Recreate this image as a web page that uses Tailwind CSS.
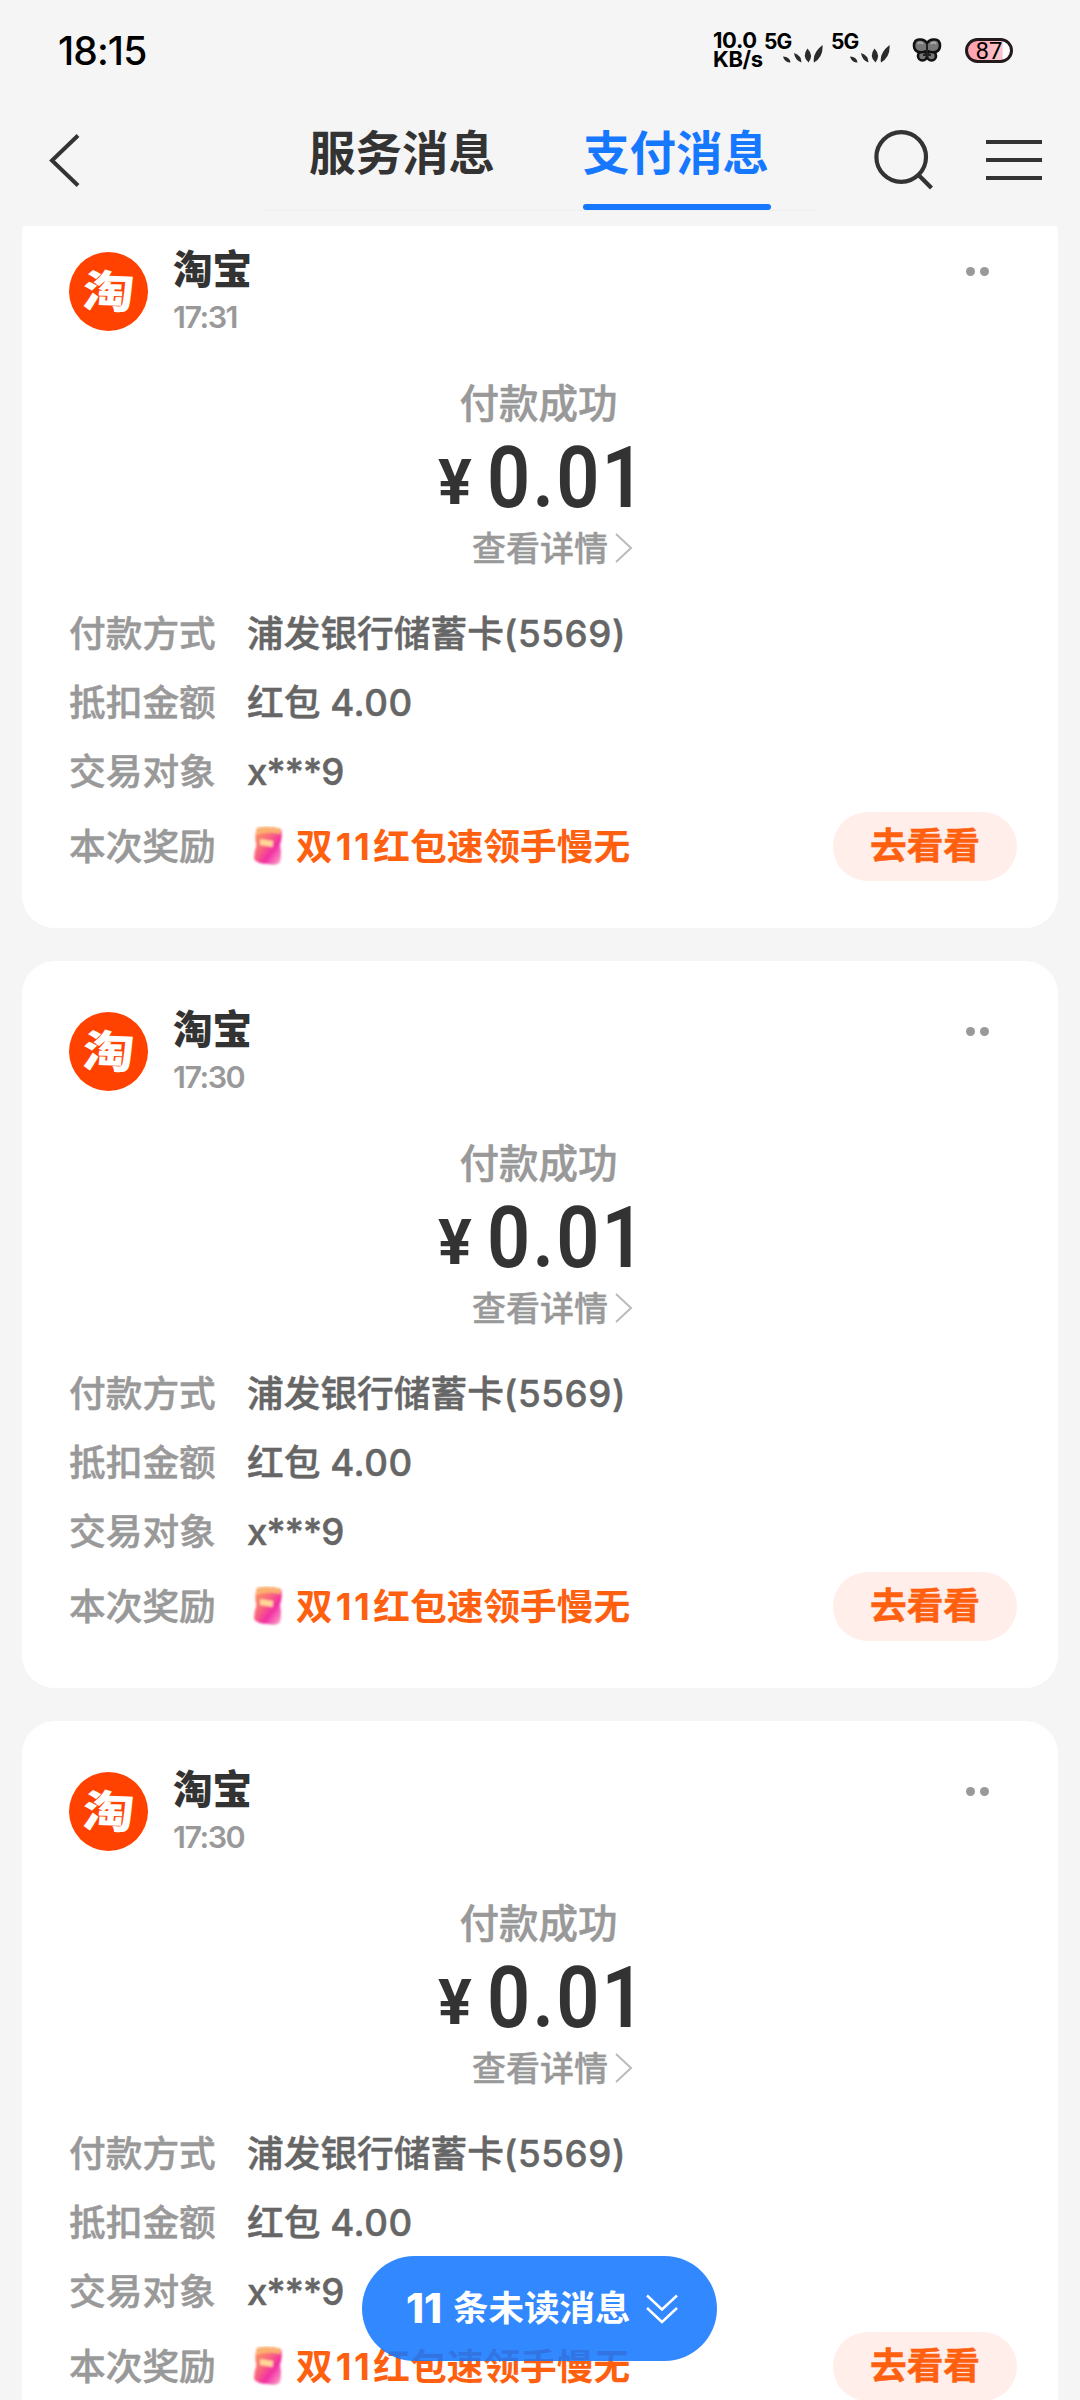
<!DOCTYPE html>
<html lang="zh-CN">
<head>
<meta charset="utf-8">
<title>支付消息</title>
<script src="https://cdn.jsdelivr.net/npm/@tailwindcss/browser@4"></script>
</head>
<body class="w-[1080px] h-[2400px] overflow-hidden bg-[#f5f5f5] flex flex-col relative font-['Inter','Noto_Sans_CJK_SC',sans-serif] text-[#333]">

<svg class="absolute w-0 h-0">
  <defs>
  <linearGradient id="env" x1="0" y1="0" x2="1" y2="1">
    <stop offset="0" stop-color="#fb9a55"/><stop offset=".4" stop-color="#f9697c"/><stop offset=".65" stop-color="#f22fa4"/><stop offset="1" stop-color="#fbb3cc"/>
  </linearGradient>
  <filter id="soft"><feGaussianBlur stdDeviation="1.1"/></filter>
  </defs>
  <symbol id="leaves" viewBox="0 0 40 18">
    <g fill="#2b2b2b">
      <path d="M0 11.5Q7 12 7.500 17.500Q1.500 17.500 0 11.500Z"/>
      <path d="M11 8Q18.500 10.500 18.500 17.500Q12 15.500 11 8Z"/>
      <path d="M24.500 3.500Q31 10.500 25.500 17.500Q18.500 11.500 24.500 3.500Z"/>
      <path d="M39.500 0Q40.500 12 31 17.500Q29 8.500 39.500 0Z"/>
    </g>
  </symbol>
  <symbol id="envelope" viewBox="0 0 32 40">
    <g filter="url(#soft)">
    <path d="M5 2Q16-1 29 3Q31 10 28 19Q30 29 28 36Q25 40 16 38Q5 38 2 33Q2 26 4.500 19Q2 10 5 2Z" fill="url(#env)"/>
    <path d="M5 2Q16-1 29 3L28 8Q16 5 4 9Z" fill="#fbb070"/>
    <path d="M8 13L21 15L20.500 21L8 19Z" fill="#ffd79a"/>
    </g>
  </symbol>
</svg>

<header class="h-[226px] shrink-0 flex flex-col">
  <div class="h-[100px] flex items-start text-black">
    <div class="ml-[58px] mt-[26px] w-[655px] text-[39px] leading-[50px] font-medium tracking-[-0.9px]">18:15</div>
    <div class="mt-[31px] w-[51px] text-[22px] leading-[19px] font-bold whitespace-nowrap tracking-[-0.4px]"><div>10.0</div><div>KB/s</div></div>
    <div class="mt-[31px] w-[19px] text-[21px] leading-[21px] font-bold tracking-[-0.8px]">5G</div>
    <svg class="mt-[45px] w-[40px] h-[18px]"><use href="#leaves"/></svg>
    <div class="ml-[8px] mt-[31px] w-[19px] text-[21px] leading-[21px] font-bold tracking-[-0.8px]">5G</div>
    <svg class="mt-[45px] w-[40px] h-[18px]"><use href="#leaves"/></svg>
    <svg class="ml-[22px] mt-[37px] w-[30px] h-[26px]" viewBox="0 0 30 26">
      <g fill="#777" stroke="#111" stroke-width="2.600" stroke-linejoin="round">
        <circle cx="10.500" cy="19" r="4.500"/><circle cx="19.500" cy="19" r="4.500"/>
        <path d="M15 14Q3 18 2 9Q2 2 8 2.500Q12 2 15 6Q18 2 22 2.500Q28 2 28 9Q27 18 15 14Z"/>
      </g>
      <path d="M15 7V20M11 18L19 18" stroke="#222" stroke-width="2"/>
      <path d="M6 7Q8 4 11 7M19 7Q22 4 24 7" stroke="#aaa" stroke-width="2" fill="none"/>
    </svg>
    <div class="ml-[23px] mt-[38px] w-[48px] h-[25px] rounded-full border-[3px] border-[#221a1c] bg-linear-to-r from-[#ffa5b2] from-20% via-[#f9c6cc] via-80% to-white to-85% flex items-center justify-center font-['Roboto'] text-[24px] leading-none">87</div>
  </div>
  <div class="h-[126px] flex items-start">
    <svg class="ml-[48px] mt-[34px] w-[34px] h-[53px]" viewBox="0 0 34 53" fill="none" stroke="#333" stroke-width="4"><path d="M30 1.500L4 26.500L30 51.500"/></svg>
    <div class="ml-[182px] w-[552px] h-[111px] border-b border-[#efefef] flex justify-between pl-[45px] pr-[45px] text-[46.500px] leading-[60px] font-bold">
      <div class="mt-[23px] w-[188px] whitespace-nowrap">服务消息</div>
      <div class="mt-[23px] w-[188px] h-[87px] flex flex-col justify-between text-[#1677ff] whitespace-nowrap"><span>支付消息</span><i class="block h-[6px] rounded-full bg-[#1677ff]"></i></div>
    </div>
    <svg class="ml-[57px] mt-[29px] w-[62px] h-[62px]" viewBox="0 0 62 62" fill="none" stroke="#333" stroke-width="4.200"><circle cx="28.200" cy="28" r="24.800"/><path d="M46 46.500L58.500 59"/></svg>
    <div class="ml-[51px] mt-[40px] w-[56px] flex flex-col gap-[14px]"><i class="block h-[4px] bg-[#333]"></i><i class="block h-[4px] bg-[#333]"></i><i class="block h-[4px] bg-[#333]"></i></div>
  </div>
</header>

<main id="list" class="flex-1 overflow-hidden px-[22px] flex flex-col gap-[33px]"></main>

<div class="absolute left-[362px] top-[2256px] w-[355px] h-[105px] rounded-full bg-[#1677ff]/88 flex items-center pl-[44px] text-white font-bold whitespace-nowrap">
  <span class="w-[47px] text-[41px] font-extrabold">11</span>
  <span class="w-[193px] text-[35.500px]">条未读消息</span>
  <svg class="w-[32px] h-[30px]" viewBox="0 0 32 30" fill="none" stroke="#fff" stroke-width="2.400"><path d="M1 1.500L16 15.500L31 1.500M1 14L16 28L31 14"/></svg>
</div>

<template id="card">
  <article class="h-[727px] shrink-0 rounded-[33px] bg-white pl-[47px] pr-[41px] pt-[50px] flex flex-col">
    <div class="flex h-[80px]">
      <div class="w-[79px] h-[79px] mt-px rounded-full bg-[#ff4200] text-white flex items-center justify-center text-[51px] font-black leading-none"><span class="scale-y-[0.87] -skew-x-3 rotate-2 -mt-px">淘</span></div>
      <div class="ml-[25px]"><div class="text-[39.500px] leading-[40px] font-black -mt-px">淘宝</div><div class="time text-[30.500px] leading-[36px] mt-[9px] font-semibold tracking-[-1.5px] text-[#999]"></div></div>
      <div class="ml-auto mr-[28px] mt-[16px] flex gap-[5px]"><i class="block size-[9px] rounded-full bg-[#999]"></i><i class="block size-[9px] rounded-full bg-[#999]"></i></div>
    </div>
    <div class="mt-[46px] self-center -ml-[9px] h-[54px] leading-[54px] text-[39.500px] font-medium text-[#999] [-webkit-text-stroke:0.5px]">付款成功</div>
    <div class="h-[90px] flex items-center text-[#333] font-['Roboto'] font-bold pl-[369px]">
      <span class="w-[49px] text-[63px] leading-[90px] mt-[14px]">¥</span>
      <span class="text-[86px] leading-[90px] mt-[4px] font-semibold origin-left scale-x-[0.88] tracking-[2.5px]">0.01</span>
    </div>
    <div class="h-[60px] -mt-[3px] pl-[403px] flex items-center text-[34px] font-medium text-[#999] [-webkit-text-stroke:0.4px]"><span class="w-[143px]">查看详情</span><svg class="w-[18px] h-[30px]" viewBox="0 0 18 30" fill="none" stroke="#bbb" stroke-width="2"><path d="M1 1L16 15L1 29"/></svg></div>
    <div class="mt-[22px] text-[36.700px] leading-[67px] font-medium text-[#666] [-webkit-text-stroke:0.5px]">
      <div class="flex h-[69px]"><span class="w-[178px] text-[#999]">付款方式</span><span>浦发银行储蓄卡<span class="tracking-[0.6px]">(5569)</span></span></div>
      <div class="flex h-[69px]"><span class="w-[178px] text-[#999]">抵扣金额</span><span>红包 <span class="tracking-[0.6px]">4.00</span></span></div>
      <div class="flex h-[69px]"><span class="w-[178px] text-[#999]">交易对象</span><span class="tracking-[-0.9px]">x***9</span></div>
      <div class="flex h-[69px] mt-[5px] items-center"><span class="w-[183px] text-[#999] -mt-px">本次奖励</span><svg class="w-[32px] h-[40px] mr-[12px] -mt-px"><use href="#envelope"/></svg><span class="text-[#ff6010] font-bold [-webkit-text-stroke:0px] -mt-px">双<span class="ml-[3px] mr-px tracking-[2.5px]">11</span>红包速领手慢无</span><span class="ml-auto w-[184px] h-[69px] rounded-full bg-[#ffeee9] text-center text-[#ff6010] font-bold">去看看</span></div>
    </div>
  </article>
</template>
<script>
  const list = document.getElementById('list'), tpl = document.getElementById('card');
  ['17:31', '17:30', '17:30'].forEach((t, i) => {
    const c = tpl.content.cloneNode(true);
    c.querySelector('.time').textContent = t;
    if (i === 0) c.querySelector('article').classList.add('-mt-[25px]');
    list.appendChild(c);
  });
</script>
</body>
</html>
